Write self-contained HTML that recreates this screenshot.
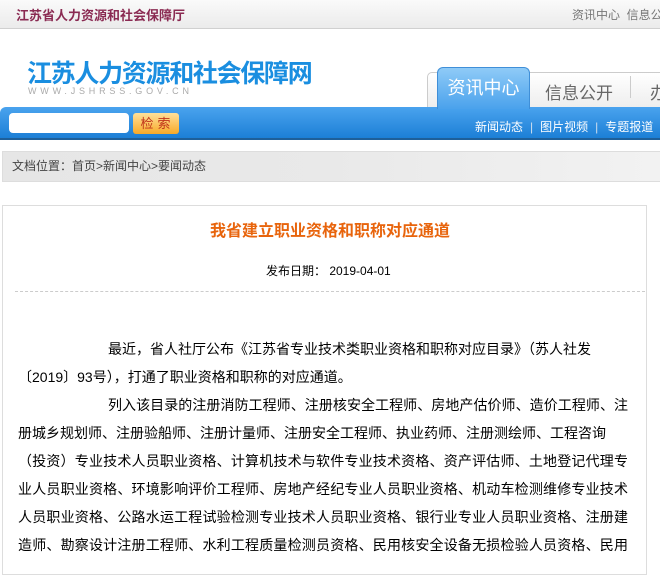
<!DOCTYPE html>
<html><head><meta charset="utf-8"><style>
*{margin:0;padding:0;box-sizing:border-box}
body{width:660px;height:563px;overflow:hidden;background:#fff;font-family:"Liberation Sans","Noto Sans CJK SC","WenQuanYi Zen Hei",sans-serif;position:relative}
.top{position:absolute;left:0;top:0;width:660px;height:29px;background:linear-gradient(#fafafa,#ebebeb);border-bottom:1px solid #d0d0d0}
.top .t{position:absolute;left:16px;top:5px;font-size:13px;font-weight:bold;color:#8a2a52}
.top .r{position:absolute;left:572px;top:6px;font-size:12px;color:#777;white-space:nowrap}
.logo{position:absolute;left:27px;top:54px;font-size:25px;font-weight:bold;color:#1a8ee0;letter-spacing:-1.3px;white-space:nowrap}
.url{position:absolute;left:28px;top:86px;font-size:9px;color:#aaa;letter-spacing:3.8px}
.tabbg{position:absolute;left:427px;top:72px;width:240px;height:36px;border:1px solid #ccc;border-radius:5px 0 0 0;background:linear-gradient(#fff,#eee)}
.tab{position:absolute;left:437px;top:67px;width:93px;height:42px;border-radius:6px 6px 0 0;background:linear-gradient(#8fcbf7,#4aa2ec);border:1px solid #3f8fd8;border-bottom:none;color:#fff;font-size:18px;text-align:center;line-height:40px}
.tab2{position:absolute;left:545px;top:79px;font-size:17px;color:#666}
.tab3{position:absolute;left:630px;top:76px;width:1px;height:22px;background:#ccc}
.tab4{position:absolute;left:650px;top:79px;font-size:17px;color:#666}
.bar{position:absolute;left:0;top:107px;width:660px;height:33px;background:linear-gradient(#4aa3ee,#1c7fd6);border-radius:6px 0 0 0;border-bottom:2px solid #1e5f99}
.inp{position:absolute;left:9px;top:113px;width:120px;height:20px;background:#fff;border-radius:4px}
.btn{position:absolute;left:133px;top:113px;width:46px;height:21px;background:linear-gradient(#ffe09a,#f7a928);border-radius:3px;color:#c0331a;font-size:13px;text-align:center;line-height:21px;letter-spacing:4px;padding-left:3px}
.links{position:absolute;left:475px;top:118px;font-size:12px;color:#fff;white-space:nowrap}
.links span{margin:0 7px;color:#cde}
.crumb{position:absolute;left:2px;top:151px;width:660px;height:31px;border:1px solid #ddd;background:linear-gradient(90deg,#e6e6e6 0,#e9e9e9 50%,#f2f2f2 100%);font-size:12px;color:#444;line-height:29px;padding-left:9px}
.box{position:absolute;left:2px;top:205px;width:645px;height:370px;border:1px solid #ddd}
.title{position:absolute;left:0;width:660px;top:217px;text-align:center;font-size:16px;font-weight:bold;color:#e8640c}
.date{position:absolute;left:266px;top:262px;font-size:12px;color:#000}
.dash{position:absolute;left:15px;top:291px;width:630px;border-top:1px dashed #ccc}
.body{position:absolute;left:18px;top:335px;width:610px;font-size:14px;color:#000}
.body div{height:28px;line-height:28px;white-space:nowrap;text-align:justify;text-align-last:justify}
.body .last{text-align-last:left}
.body .ind{padding-left:90px}
</style></head><body>
<div class="top"><div class="t">江苏省人力资源和社会保障厅</div><div class="r">资讯中心&nbsp;&nbsp;信息公开</div></div>
<div class="logo">江苏人力资源和社会保障网</div>
<div class="url">WWW.JSHRSS.GOV.CN</div>
<div class="tabbg"></div>
<div class="tab2">信息公开</div><div class="tab3"></div><div class="tab4">办</div>
<div class="bar"></div>
<div class="tab">资讯中心</div>
<div class="inp"></div>
<div class="btn">检索</div>
<div class="links">新闻动态<span>|</span>图片视频<span>|</span>专题报道</div>
<div class="crumb">文档位置：首页&gt;新闻中心&gt;要闻动态</div>
<div class="box"></div>
<div class="title">我省建立职业资格和职称对应通道</div>
<div class="date">发布日期：&nbsp;2019-04-01</div>
<div class="dash"></div>
<div class="body">
<div class="ind last">最近，省人社厅公布《江苏省专业技术类职业资格和职称对应目录》（苏人社发</div>
<div class="last">〔2019〕93号），打通了职业资格和职称的对应通道。</div>
<div class="ind">列入该目录的注册消防工程师、注册核安全工程师、房地产估价师、造价工程师、注</div>
<div class="last">册城乡规划师、注册验船师、注册计量师、注册安全工程师、执业药师、注册测绘师、工程咨询</div>
<div>（投资）专业技术人员职业资格、计算机技术与软件专业技术资格、资产评估师、土地登记代理专</div>
<div>业人员职业资格、环境影响评价工程师、房地产经纪专业人员职业资格、机动车检测维修专业技术</div>
<div>人员职业资格、公路水运工程试验检测专业技术人员职业资格、银行业专业人员职业资格、注册建</div>
<div>造师、勘察设计注册工程师、水利工程质量检测员资格、民用核安全设备无损检验人员资格、民用</div>
</div>
</body></html>
